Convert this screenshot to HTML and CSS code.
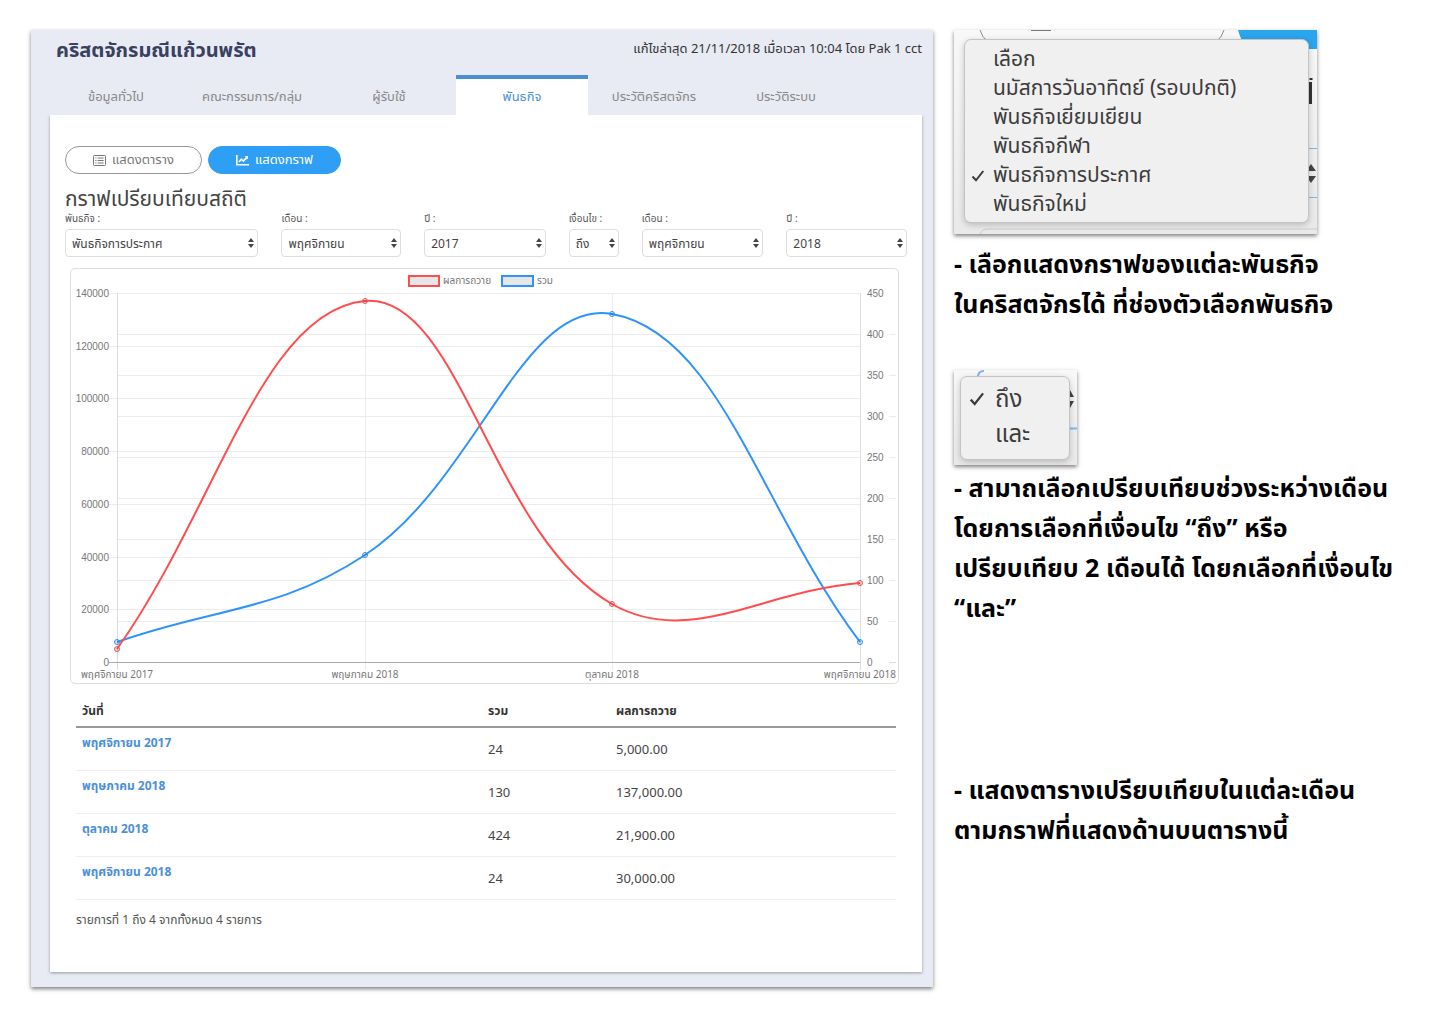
FILE: index.html
```html
<!DOCTYPE html>
<html lang="th">
<head>
<meta charset="utf-8">
<meta name="viewport" content="width=device-width, initial-scale=1">
<title>คริสตจักรมณีแก้วนพรัต</title>
<link rel="stylesheet" href="styles.css">
</head>
<body>
<div class="page">
  <main class="panel">
    <header class="panel-head">
      <h1 class="title">คริสตจักรมณีแก้วนพรัต</h1>
      <p class="updated">แก้ไขล่าสุด 21/11/2018 เมื่อเวลา 10:04 โดย Pak 1 cct</p>
    </header>
    <nav class="tabs">
      <a class="tab" href="#general">ข้อมูลทั่วไป</a>
      <a class="tab" href="#groups">คณะกรรมการ/กลุ่ม</a>
      <a class="tab" href="#servants">ผู้รับใช้</a>
      <a class="tab tab-active" href="#mission">พันธกิจ</a>
      <a class="tab" href="#history">ประวัติคริสตจักร</a>
      <a class="tab" href="#log">ประวัติระบบ</a>
    </nav>
    <section class="card">
      <div class="switch">
        <button class="pill" type="button">
          <svg class="icon" viewBox="0 0 13 11" aria-hidden="true"><rect x=".5" y=".5" width="12" height="10" rx="1" fill="none" stroke="currentColor"/><path d="M2.3 3h1.2M4.6 3h6M2.3 5.5h1.2M4.6 5.5h6M2.3 8h1.2M4.6 8h6" stroke="currentColor" fill="none"/></svg>
          แสดงตาราง
        </button>
        <button class="pill pill-active" type="button">
          <svg class="icon" viewBox="0 0 13 11" aria-hidden="true"><path d="M.8 0v9.7H13" stroke="currentColor" stroke-width="1.6" fill="none"/><path d="M2.8 7l2.6-2.8 2 1.9 3.2-3.5" stroke="currentColor" stroke-width="1.7" fill="none"/><path d="M8.6 1H12v3.6z" fill="currentColor"/></svg>
          แสดงกราฟ
        </button>
      </div>
      <h2 class="subtitle">กราฟเปรียบเทียบสถิติ</h2>
      <form class="filters">
        <div class="field">
          <label for="mission">พันธกิจ :</label>
          <div class="pick"><select id="mission"><option>พันธกิจการประกาศ</option></select><svg class="carets" viewBox="0 0 6 10" aria-hidden="true"><path d="M3 0l3 4H0zM3 10l3-4H0z"/></svg></div>
        </div>
        <div class="field">
          <label for="month1">เดือน :</label>
          <div class="pick"><select id="month1"><option>พฤศจิกายน</option></select><svg class="carets" viewBox="0 0 6 10" aria-hidden="true"><path d="M3 0l3 4H0zM3 10l3-4H0z"/></svg></div>
        </div>
        <div class="field">
          <label for="year1">ปี :</label>
          <div class="pick"><select id="year1"><option>2017</option></select><svg class="carets" viewBox="0 0 6 10" aria-hidden="true"><path d="M3 0l3 4H0zM3 10l3-4H0z"/></svg></div>
        </div>
        <div class="field">
          <label for="cond">เงื่อนไข :</label>
          <div class="pick"><select id="cond"><option>ถึง</option></select><svg class="carets" viewBox="0 0 6 10" aria-hidden="true"><path d="M3 0l3 4H0zM3 10l3-4H0z"/></svg></div>
        </div>
        <div class="field">
          <label for="month2">เดือน :</label>
          <div class="pick"><select id="month2"><option>พฤศจิกายน</option></select><svg class="carets" viewBox="0 0 6 10" aria-hidden="true"><path d="M3 0l3 4H0zM3 10l3-4H0z"/></svg></div>
        </div>
        <div class="field">
          <label for="year2">ปี :</label>
          <div class="pick"><select id="year2"><option>2018</option></select><svg class="carets" viewBox="0 0 6 10" aria-hidden="true"><path d="M3 0l3 4H0zM3 10l3-4H0z"/></svg></div>
        </div>
      </form>
      <div class="chart-box">
        <svg class="chart" viewBox="0 0 827 414" role="img" aria-label="กราฟเปรียบเทียบสถิติ">
          <g class="legend">
            <rect x="338" y="7" width="30" height="10" fill="#e6e6e6" stroke="#ff4d4f" stroke-width="2"/>
            <text x="372" y="15">ผลการถวาย</text>
            <rect x="431" y="7" width="31" height="10" fill="#e6e6e6" stroke="#2e93fa" stroke-width="2"/>
            <text x="466" y="15">รวม</text>
          </g>
          <path class="grid" d="M38 24.500H789M38 77.500H789M38 129.500H789M38 182.500H789M38 235.500H789M38 288.500H789M38 340.500H789M46 65.500H789M46 106.500H789M46 147.500H789M46 188.500H789M46 229.500H789M46 270.500H789M46 311.500H789M46 352.500H789M294.500 24V401M541.500 24V401M818 65.500H825M818 106.500H825M818 147.500H825M818 188.500H825M818 229.500H825M818 270.500H825M818 311.500H825M818 352.500H825"/>
          <path class="edge" d="M46.500 24V401M789.500 24V401M818 393.500H825"/>
          <path class="zero" d="M38 393.500H789"/>
          <g class="ticks" text-anchor="end">
            <text x="38" y="28">140000</text><text x="38" y="81">120000</text><text x="38" y="133">100000</text><text x="38" y="186">80000</text><text x="38" y="239">60000</text><text x="38" y="292">40000</text><text x="38" y="344">20000</text><text x="38" y="397">0</text>
          </g>
          <g class="ticks">
            <text x="796" y="28">450</text><text x="796" y="69">400</text><text x="796" y="110">350</text><text x="796" y="151">300</text><text x="796" y="192">250</text><text x="796" y="233">200</text><text x="796" y="274">150</text><text x="796" y="315">100</text><text x="796" y="356">50</text><text x="796" y="397">0</text>
          </g>
          <g class="months">
            <text x="46" y="409" text-anchor="middle">พฤศจิกายน 2017</text><text x="294" y="409" text-anchor="middle">พฤษภาคม 2018</text><text x="541" y="409" text-anchor="middle">ตุลาคม 2018</text><text x="825" y="409" text-anchor="end">พฤศจิกายน 2018</text>
          </g>
          <path class="line line-blue" d="M46 373C145 338 208 343 294 286C406 212 451 29 541 45C649 64 690 242 789 373"/>
          <path class="line line-red" d="M46 380C145 241 191 41 294 32C389 24 420 266 541 335C618 379 690 322 789 314"/>
          <g class="dots dots-blue"><circle cx="46" cy="373" r="2.500"/><circle cx="294" cy="286" r="2.500"/><circle cx="541" cy="45" r="2.500"/><circle cx="789" cy="373" r="2.500"/></g>
          <g class="dots dots-red"><circle cx="46" cy="380" r="2.500"/><circle cx="294" cy="32" r="2.500"/><circle cx="541" cy="335" r="2.500"/><circle cx="789" cy="314" r="2.500"/></g>
        </svg>
      </div>
      <table class="stats">
        <thead><tr><th class="col-date">วันที่</th><th class="col-sum">รวม</th><th>ผลการถวาย</th></tr></thead>
        <tbody>
          <tr><td class="date"><a href="#2017-11">พฤศจิกายน 2017</a></td><td>24</td><td>5,000.00</td></tr>
          <tr><td class="date"><a href="#2018-05">พฤษภาคม 2018</a></td><td>130</td><td>137,000.00</td></tr>
          <tr><td class="date"><a href="#2018-10">ตุลาคม 2018</a></td><td>424</td><td>21,900.00</td></tr>
          <tr><td class="date"><a href="#2018-11">พฤศจิกายน 2018</a></td><td>24</td><td>30,000.00</td></tr>
        </tbody>
      </table>
      <p class="count">รายการที่ 1 ถึง 4 จากทั้งหมด 4 รายการ</p>
    </section>
  </main>

  <aside class="notes">
    <section class="note note-mission">
      <div class="shot shot-mission">
        <svg class="backdrop" viewBox="0 0 363 204" aria-hidden="true">
          <path d="M284 0h79v19h-70q-6-8-9-19z" fill="#2aa5ee"/>
          <path d="M26 0q2 7 7 11M270 0q-2 7-7 11" fill="none" stroke="#888"/>
          <path d="M77 0h20" stroke="#777" stroke-width="2"/>
          <path d="M356.500 52v22M357 50v-2" stroke="#333" stroke-width="3"/>
          <path d="M350 118.500h13M350 167.500h13" stroke="#7fb5ee"/>
          <path d="M357 134l5 7h-10zM357 153l5-7h-10z" fill="#444"/>
          <path d="M26 204q2-5 8-5h329" fill="none" stroke="#ccc"/>
        </svg>
        <ul class="menu menu-mission">
          <li>เลือก</li>
          <li>นมัสการวันอาทิตย์ (รอบปกติ)</li>
          <li>พันธกิจเยี่ยมเยียน</li>
          <li>พันธกิจกีฬา</li>
          <li class="chosen"><svg class="check" viewBox="0 0 14 13" aria-hidden="true"><path d="M1.500 7.500L5 11.300 12.300 2"/></svg>พันธกิจการประกาศ</li>
          <li>พันธกิจใหม่</li>
        </ul>
      </div>
      <p class="text">- เลือกแสดงกราฟของแต่ละพันธกิจ<br>ในคริสตจักรได้ ที่ช่องตัวเลือกพันธกิจ</p>
    </section>
    <section class="note note-cond">
      <div class="shot shot-cond">
        <svg class="backdrop" viewBox="0 0 123 95" aria-hidden="true">
          <path d="M24 7q0-6 6-6" fill="none" stroke="#7fb5ee" stroke-width="2"/>
          <path d="M116 58.500h7" stroke="#7fb5ee" stroke-width="2"/>
          <path d="M116 20l4 7h-7zM116 38l4-7h-7z" fill="#444"/>
        </svg>
        <ul class="menu menu-cond">
          <li class="chosen"><svg class="check" viewBox="0 0 14 13" aria-hidden="true"><path d="M1.500 7.500L5 11.300 12.300 2"/></svg>ถึง</li>
          <li>และ</li>
        </ul>
      </div>
      <p class="text">- สามาถเลือกเปรียบเทียบช่วงระหว่างเดือน<br>โดยการเลือกที่เงื่อนไข “ถึง” หรือ<br>เปรียบเทียบ 2 เดือนได้ โดยกเลือกที่เงื่อนไข<br>“และ”</p>
    </section>
    <section class="note">
      <p class="text">- แสดงตารางเปรียบเทียบในแต่ละเดือน<br>ตามกราฟที่แสดงด้านบนตารางนี้</p>
    </section>
  </aside>
</div>
</body>
</html>
```
FILE: styles.css
```css
* { box-sizing: border-box; }
body {
  margin: 0;
  background: #fff;
  color: #444;
  font-family: "Noto Sans", "Noto Sans Thai", sans-serif;
}
h1, h2, p, ul { margin: 0; padding: 0; }
a { text-decoration: none; }

.page {
  display: grid;
  grid-template-columns: minmax(0, 902fr) minmax(0, 456fr);
  gap: 21px;
  align-items: start;
  padding: 30px 30px 34px 31px;
}

.panel {
  background: #e8ebf3;
  padding: 0 11px 15px 19px;
  box-shadow: 0 2px 4px rgba(0, 0, 0, .5);
}
.panel-head {
  display: flex;
  justify-content: space-between;
  align-items: center;
  height: 45px;
  padding: 0 0 5px 6px;
  white-space: nowrap;
}
.title { font-size: 20px; line-height: 40px; color: #3a4060; }
.updated { padding-bottom: 4px; font-size: 13px; line-height: 32px; color: #333; }

.tabs {
  display: grid;
  grid-template-columns: 132fr 140fr 134fr 132fr 132fr 132fr 70fr;
  height: 40px;
}
.tab {
  padding-top: 3px;
  border-top: 4px solid transparent;
  font-size: 13px;
  line-height: 28px;
  text-align: center;
  white-space: nowrap;
  color: #888;
}
.tab-active { background: #fff; border-top-color: #4a8fd0; color: #4a90d9; }

.card {
  background: #fff;
  padding: 31px 15px 41px;
  box-shadow: 0 1px 3px rgba(0, 0, 0, .35);
  clip-path: inset(0 -4px -4px -4px);
}
.switch { display: flex; gap: 6px; }
.pill {
  display: flex;
  align-items: center;
  justify-content: center;
  gap: 6px;
  width: 137px;
  height: 28px;
  padding: 0;
  border: 1px solid #999;
  border-radius: 14px;
  background: #fff;
  color: #777;
  font-family: inherit;
  font-size: 13px;
}
.pill-active { width: 133px; border-color: #2e9ff5; background: #2e9ff5; color: #fff; }
.icon { width: 13px; height: 11px; }

.subtitle { margin-top: 10px; font-size: 21px; font-weight: 400; line-height: 28px; }
.filters {
  display: grid;
  grid-template-columns: 194fr 120fr 122fr 50fr 122fr 121fr;
  gap: 23px;
}
.field label { display: block; margin-bottom: 5px; font-size: 10px; line-height: 12px; color: #555; white-space: nowrap; }
.pick { position: relative; }
.pick select {
  display: block;
  width: 100%;
  height: 28px;
  padding: 0 6px;
  border: 1px solid #ddd;
  border-radius: 4px;
  background: #fff;
  appearance: none;
  color: #444;
  font-family: inherit;
  font-size: 12px;
}
.carets { position: absolute; right: 4px; top: 9px; width: 6px; height: 10px; fill: #444; }

.chart-box {
  margin: 11px 8px 0 5px;
  border: 1px solid #ddd;
  border-radius: 5px;
}
.chart { display: block; width: 100%; height: auto; font-size: 10px; fill: #777; }
.ticks { font-family: "Liberation Sans", sans-serif; }
.grid, .edge, .zero { fill: none; stroke: #ececec; }
.edge { stroke: #ddd; }
.zero { stroke: #aaa; }
.line { fill: none; stroke-width: 2; }
.line-red, .dots-red { stroke: #ff4d4f; }
.line-blue, .dots-blue { stroke: #2e93fa; }
.dots { fill: rgba(0, 0, 0, .1); }

.stats {
  width: calc(100% - 22px);
  margin: 7px 11px 0;
  border-collapse: collapse;
  table-layout: fixed;
  font-size: 13px;
  text-align: left;
}
.stats th { height: 36px; padding: 4px 6px 0; border-bottom: 2px solid #999; font-size: 12px; color: #333; }
.stats td { height: 43px; padding: 0 6px; border-bottom: 1px solid #eee; }
.col-date { width: 406px; }
.col-sum { width: 128px; }
.stats .date { padding-bottom: 12px; font-size: 12px; font-weight: 700; }
.date a { color: #4a90d9; }
.count { margin: 9px 11px 0; font-size: 12px; line-height: 22px; color: #555; }

.notes { color: #000; white-space: nowrap; }
.shot {
  position: relative;
  overflow: hidden;
  background: linear-gradient(#f8f8f8, #e9e9e9);
  box-shadow: 0 2px 4px rgba(0, 0, 0, .5);
}
.shot-mission { width: 363px; padding: 9px 8px 11px 10px; }
.shot-cond { width: 123px; padding: 6px 7px 5px 6px; }
.backdrop { position: absolute; inset: 0; width: 100%; height: 100%; }
.menu {
  position: relative;
  list-style: none;
  border: 1px solid #c4c4c4;
  border-radius: 7px;
  background: #f0f0f0;
  box-shadow: 0 2px 6px rgba(0, 0, 0, .2);
  color: #3c3c3c;
}
.menu li { position: relative; }
.menu-mission { padding: 4px 0 4px 28px; font-size: 21px; line-height: 29px; }
.menu-cond { padding: 3px 0 9px 34px; font-size: 24px; line-height: 35px; }
.check { position: absolute; left: -22px; top: 9px; width: 14px; height: 13px; fill: none; stroke: #3c3c3c; stroke-width: 2; }
.menu-cond .check { left: -26px; top: 11px; width: 16px; height: 15px; }
.text { margin-top: 9px; font-size: 25px; font-weight: 700; line-height: 40px; }
.note-cond { margin-top: 47px; }
.note-cond .text { margin-top: 2px; margin-bottom: 142px; }
```
